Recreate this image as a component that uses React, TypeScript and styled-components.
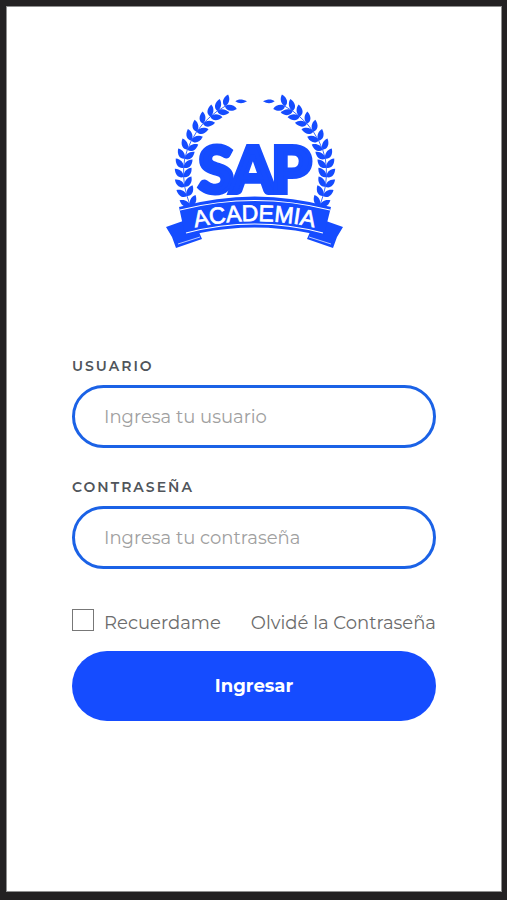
import React from 'react';
import styled, { createGlobalStyle } from 'styled-components';

const BLUE = '#154cff';

const GlobalStyle = createGlobalStyle`
  *, *::before, *::after { box-sizing: border-box; }
  body {
    margin: 0;
    background: #232122;
    font-family: Montserrat, Inter, 'Open Sans', sans-serif;
  }
`;

const Frame = styled.div`
  display: flex;
  min-height: 100vh;
  padding: 6px 5px 8px 6px;
  background: #232122;
`;

const Screen = styled.main`
  flex: 1;
  display: flex;
  flex-direction: column;
  align-items: center;
  padding: 87px 65px 48px;
  background: #fff;
  border: 1px solid #8f8f8f;
`;

const Logo = styled.svg`
  display: block;
  width: 180px;
  height: 156px;
`;

const Form = styled.form`
  display: flex;
  flex-direction: column;
  width: 100%;
  margin-top: 106px;
`;

const Field = styled.div`
  display: flex;
  flex-direction: column;
  gap: 9px;
  margin-bottom: 29px;
`;

const Label = styled.label`
  font-size: 14px;
  line-height: 20px;
  font-weight: 600;
  letter-spacing: 2px;
  color: #50555b;
`;

const TextInput = styled.input`
  width: 100%;
  height: 63px;
  padding: 0 29px;
  border: 3px solid #1b62e6;
  border-radius: 32px;
  background: #fff;
  color: #444;
  font: inherit;
  font-size: 18px;
  outline: none;
  &::placeholder { color: #a0a0a0; opacity: 1; }
`;

const Options = styled.div`
  display: flex;
  justify-content: space-between;
  align-items: center;
  margin: 11px 0 14px;
`;

const Remember = styled.label`
  display: flex;
  align-items: center;
  gap: 10px;
  font-size: 18px;
  line-height: 28px;
  color: #6c6c6c;
`;

const Checkbox = styled.input`
  appearance: none;
  width: 22px;
  height: 22px;
  margin: 0 0 6px;
  border: 1px solid #777;
  background: #fff;
  &:checked { background: ${BLUE}; }
`;

const Forgot = styled.a`
  font-size: 18px;
  line-height: 28px;
  color: #6c6c6c;
  text-decoration: none;
`;

const Submit = styled.button`
  height: 70px;
  border: 0;
  border-radius: 35px;
  background: ${BLUE};
  color: #fff;
  font: inherit;
  font-size: 18px;
  font-weight: 700;
  cursor: pointer;
`;

const stem: [number, number][] = [
  [94, 348], [84, 318], [77, 290], [74, 261], [74, 233], [77, 206], [85, 179],
  [97, 152], [113, 125], [132, 101], [154, 80], [175, 63], [198, 49],
];
const LEAF = 'M0 0 C4 -13 20 -17 36 -5 C27 7 10 9 0 0Z';

const Branch = () => (
  <g transform="translate(-5 -4) scale(0.3333)">
    <path d={'M' + stem.map((p) => p.join(' ')).join(' L')} fill="none" stroke={BLUE} strokeWidth="2.5" />
    {stem.map(([x, y], i) => {
      const a = stem[Math.max(0, i - 1)];
      const b = stem[Math.min(stem.length - 1, i + 1)];
      const angle = (Math.atan2(b[1] - a[1], b[0] - a[0]) * 180) / Math.PI;
      return (
        <g key={i} transform={`translate(${x} ${y}) rotate(${angle})`} fill={BLUE}>
          <path d={LEAF} transform="rotate(-36)" />
          <path d={LEAF} transform="rotate(36) scale(1 -1)" />
        </g>
      );
    })}
    <path d="M229 34 C239 26 251 28 264 34 C251 42 239 41 229 34Z" fill={BLUE} />
  </g>
);

const RibbonTail = () => (
  <g>
    <path d="M2 133 L19 127 L22 139 L35 138 L38 145 L12 154 L8 143Z" fill={BLUE} />
    <path d="M14 150 L36 143" stroke="#fff" strokeWidth="0.7" />
  </g>
);

const AcademyLogo = () => (
  <Logo viewBox="0 0 180 156" role="img" aria-label="SAP Academia">
    <Branch />
    <g transform="translate(182 0) scale(-1 1)"><Branch /></g>
    <text
      x="34 66 107" y="99" fill={BLUE} stroke={BLUE} strokeWidth="4"
      fontFamily="Lato, sans-serif" fontWeight="900" fontSize="65"
    >
      SAP
    </text>
    <RibbonTail />
    <g transform="translate(181 0) scale(-1 1)"><RibbonTail /></g>
    <path d="M15 113 Q90.500 92 167 113 L160 141 L145 139 Q90.500 128 36 139 L21 141Z" fill={BLUE} />
    <path d="M16 116 Q90.500 97 166 116" fill="none" stroke="#fff" strokeWidth="1.2" />
    <path d="M22 139 Q90.500 121 159 139" fill="none" stroke="#fff" strokeWidth="1.2" />
    <path id="ribbon-baseline" d="M24 135 Q90.500 119 157 135" fill="none" />
    <text fill="#fff" stroke="#fff" strokeWidth="0.7" fontFamily="'Liberation Sans', sans-serif" fontSize="23">
      <textPath href="#ribbon-baseline" startOffset="50%" textAnchor="middle">ACADEMIA</textPath>
    </text>
  </Logo>
);

export default function App() {
  return (
    <>
      <GlobalStyle />
      <Frame>
        <Screen>
          <AcademyLogo />
          <Form onSubmit={(e) => e.preventDefault()}>
            <Field>
              <Label htmlFor="user">USUARIO</Label>
              <TextInput id="user" type="text" placeholder="Ingresa tu usuario" />
            </Field>
            <Field>
              <Label htmlFor="password">CONTRASEÑA</Label>
              <TextInput id="password" type="password" placeholder="Ingresa tu contraseña" />
            </Field>
            <Options>
              <Remember>
                <Checkbox type="checkbox" />
                Recuerdame
              </Remember>
              <Forgot href="#">Olvidé la Contraseña</Forgot>
            </Options>
            <Submit type="submit">Ingresar</Submit>
          </Form>
        </Screen>
      </Frame>
    </>
  );
}
